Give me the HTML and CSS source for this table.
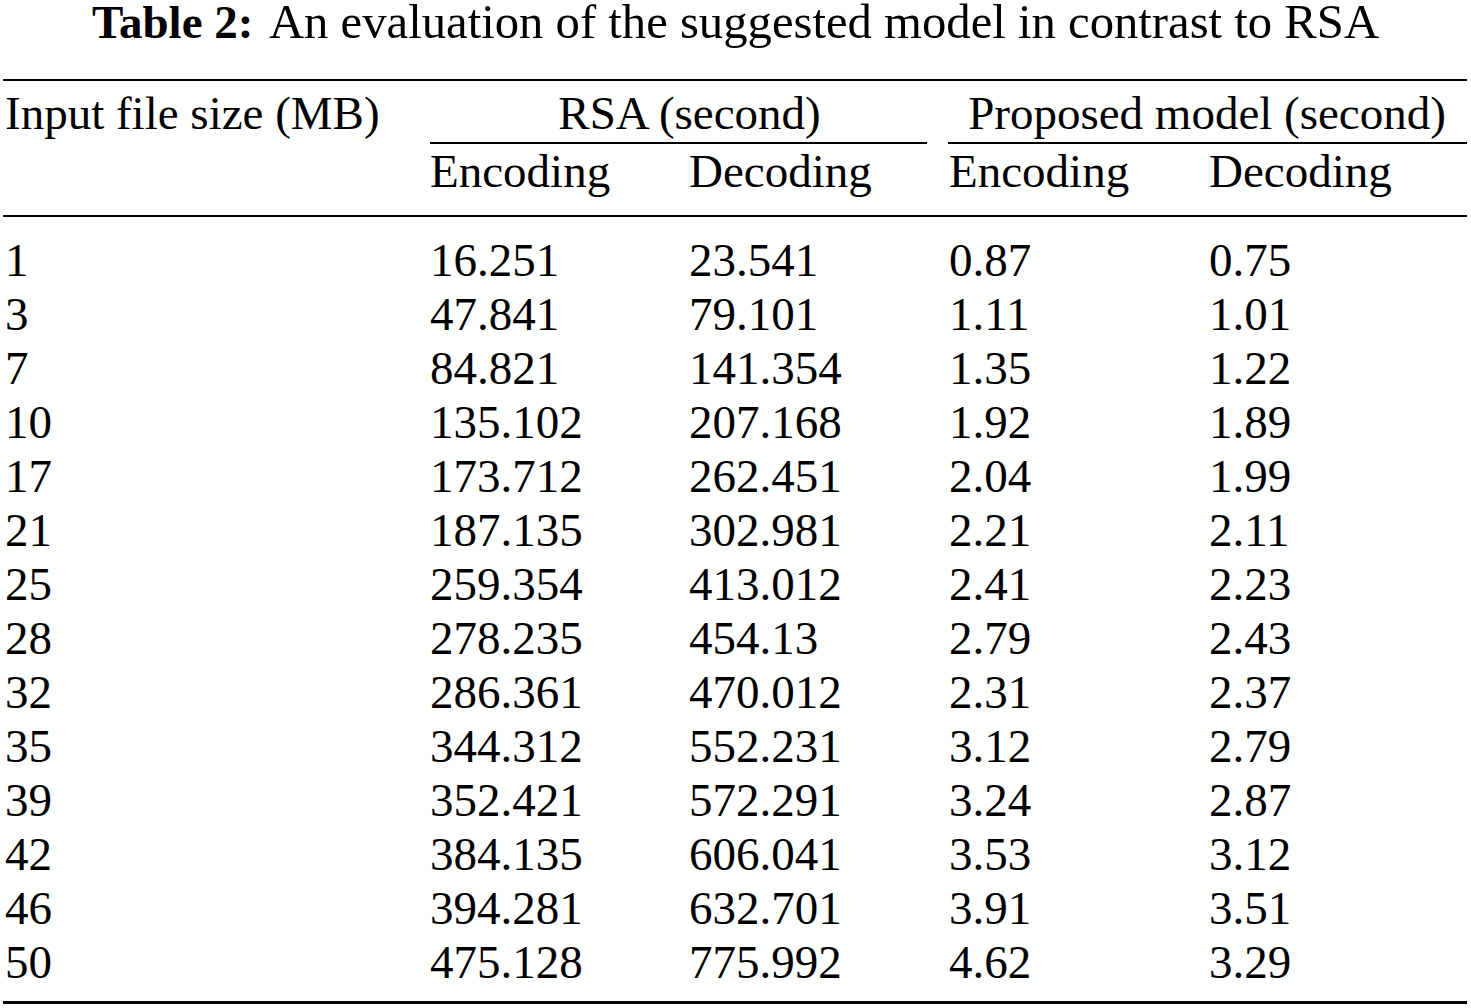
FILE: index.html
```html
<!DOCTYPE html>
<html lang="en">
<head>
<meta charset="utf-8">
<title>Table 2</title>
<link rel="stylesheet" href="styles.css">
</head>
<body>
<div class="caption"><span class="caption-label">Table 2:</span> An evaluation of the suggested model in contrast to RSA</div>
<table class="results">
  <colgroup>
    <col class="c-size">
    <col class="c-num">
    <col class="c-num">
    <col class="c-num">
    <col class="c-num">
  </colgroup>
  <thead>
    <tr class="head-top">
      <th rowspan="2" class="size-head">Input file size (MB)</th>
      <th colspan="2" class="group group-rsa">RSA (second)</th>
      <th colspan="2" class="group group-prop">Proposed model (second)</th>
    </tr>
    <tr class="head-sub">
      <th>Encoding</th>
      <th>Decoding</th>
      <th>Encoding</th>
      <th>Decoding</th>
    </tr>
  </thead>
  <tbody>
    <tr><td>1</td><td>16.251</td><td>23.541</td><td>0.87</td><td>0.75</td></tr>
    <tr><td>3</td><td>47.841</td><td>79.101</td><td>1.11</td><td>1.01</td></tr>
    <tr><td>7</td><td>84.821</td><td>141.354</td><td>1.35</td><td>1.22</td></tr>
    <tr><td>10</td><td>135.102</td><td>207.168</td><td>1.92</td><td>1.89</td></tr>
    <tr><td>17</td><td>173.712</td><td>262.451</td><td>2.04</td><td>1.99</td></tr>
    <tr><td>21</td><td>187.135</td><td>302.981</td><td>2.21</td><td>2.11</td></tr>
    <tr><td>25</td><td>259.354</td><td>413.012</td><td>2.41</td><td>2.23</td></tr>
    <tr><td>28</td><td>278.235</td><td>454.13</td><td>2.79</td><td>2.43</td></tr>
    <tr><td>32</td><td>286.361</td><td>470.012</td><td>2.31</td><td>2.37</td></tr>
    <tr><td>35</td><td>344.312</td><td>552.231</td><td>3.12</td><td>2.79</td></tr>
    <tr><td>39</td><td>352.421</td><td>572.291</td><td>3.24</td><td>2.87</td></tr>
    <tr><td>42</td><td>384.135</td><td>606.041</td><td>3.53</td><td>3.12</td></tr>
    <tr><td>46</td><td>394.281</td><td>632.701</td><td>3.91</td><td>3.51</td></tr>
    <tr><td>50</td><td>475.128</td><td>775.992</td><td>4.62</td><td>3.29</td></tr>
  </tbody>
</table>
</body>
</html>
```

FILE: styles.css
```css
html, body {
  margin: 0;
  padding: 0;
  background: #ffffff;
}

body {
  font-family: "Liberation Serif", "Times New Roman", serif;
  color: #000000;
  font-size: 47px;
}

.caption {
  text-align: center;
  font-size: 48.7px;
  line-height: 44px;
  height: 44px;
  margin-bottom: 35px;
  white-space: nowrap;
}

.caption-label {
  font-weight: bold;
  font-size: 47px;
  margin-right: 6px;
}

.results {
  margin-left: 3px;
  width: 1464px;
  table-layout: fixed;
  border-collapse: separate;
  border-spacing: 0;
  border-top: 2px solid #000;
  border-bottom: 3px solid #000;
}

.c-size { width: 425px; }
.c-num { width: 260px; }
.results col.c-num:nth-child(2) { width: 259px; }

.results th,
.results td {
  font-weight: normal;
  text-align: left;
  vertical-align: top;
  padding: 0 0 0 2px;
  line-height: 54px;
  white-space: nowrap;
}

.results .head-top th {
  padding-top: 5px;
}

.results .group {
  text-align: center;
  padding-bottom: 4px;
  background-image: linear-gradient(#000, #000);
  background-repeat: no-repeat;
  background-size: calc(100% - 22px) 2px;
  background-position: 2px 100%;
}

.results .group-rsa {
  padding-left: 4px;
}

.results .group-prop {
  padding-left: 0;
  background-size: calc(100% - 1px) 2px;
  background-position: 1px 100%;
}

.results .head-sub th {
  padding-top: 0;
  padding-bottom: 17px;
}

.results tbody tr:first-child td {
  border-top: 2px solid #000;
  padding-top: 16px;
}

.results tbody tr:last-child td {
  padding-bottom: 12px;
}
```
